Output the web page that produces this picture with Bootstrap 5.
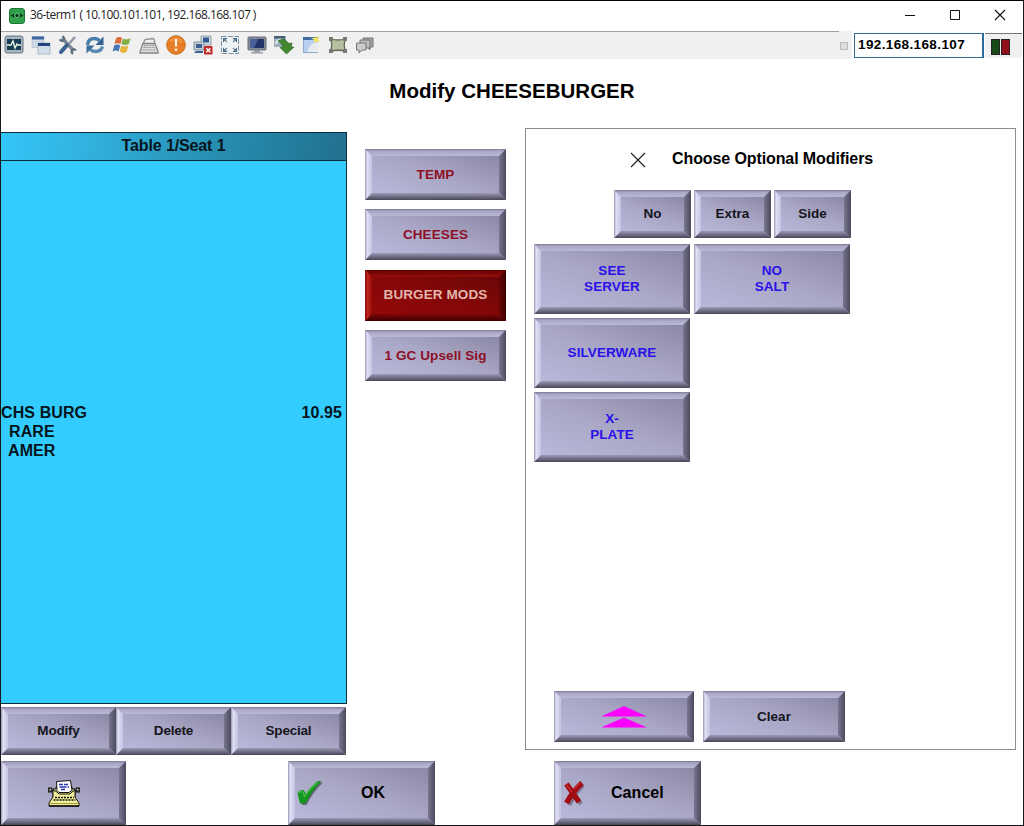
<!DOCTYPE html>
<html lang="en">
<head>
<meta charset="utf-8">
<meta name="viewport" content="width=device-width, initial-scale=1">
<title>36-term1</title>
<link href="https://cdn.jsdelivr.net/npm/bootstrap@5.3.0/dist/css/bootstrap.min.css" rel="stylesheet">
<style>
body{font-family:"Liberation Sans",Arial,sans-serif;color:#000;background:#fff;overflow:hidden}
.win{width:1024px;height:826px;border:1px solid #17171c;border-top-color:#000}
.titlebar{height:30px;padding-left:8px;font:12px/30px "Open Sans",sans-serif;color:#222}
.titlebar .cap{margin:-2px 0 0 5px;letter-spacing:-.57px;white-space:nowrap}
.winctl{gap:33px;padding-right:17px;margin-top:-2px}
.tools{height:28px}
.strip{width:851px;padding-left:3px;background:#f0f0f0;position:relative}
.strip .icons{gap:7px}
.strip svg{width:20px;height:20px;display:block;flex:none}
.strip::before{content:"";position:absolute;left:0;top:0;width:838px;height:1px;background:#a3a3a3}
.tick{width:8px;height:8px;background:#ddd;border:1px solid #bbb;margin:2px 4px 0 0}
.addr{width:130px;height:25px;margin:2px 0 0 2px;border:1px solid #2c6c98;border-right-width:2px;padding-left:3px;font:bold 13.5px/21px "Liberation Sans",sans-serif;letter-spacing:.38px;background:#fff}
.leds{width:37px;height:25px;margin:2px 0 0 1px;border-top:1px solid #777;background:#f0f0f0;padding:5px 0 0 6px;gap:1px}
.led{width:9px;height:16px;border:1px solid #222}
.page-title{height:69px;padding-top:20px;font-size:20.5px;line-height:24px;font-weight:bold;letter-spacing:.02px}
.main{height:623px}
.left{width:346px;margin-top:4px}
.check{height:572px;background:#3cf;border:1px solid #0d2c3c;border-left:0}
.check-head{height:28px;border-bottom:1px solid #0d2c3c;background:linear-gradient(100deg,#33c6f8 0%,#32b2de 25%,#2790b4 60%,#247c9c 85%,#22708e);font-size:16px;line-height:26px;font-weight:bold;letter-spacing:-.12px;color:#06141b}
.check-lines{margin-top:242px;padding-right:4px;font-size:16px;line-height:19px;font-weight:bold;color:#06141b;letter-spacing:.1px}
.key{appearance:none;display:flex;align-items:center;justify-content:center;flex:none;text-align:center;padding:0;border:7px solid;color:#15151c;font-weight:bold;font-size:13.5px;line-height:16px;letter-spacing:0;border-radius:0;background:linear-gradient(20deg,#bab8da 0%,#a9a7c5 50%,#8b89a5 100%);
border-image:url("data:image/svg+xml,%3Csvg xmlns='http://www.w3.org/2000/svg' width='32' height='32'%3E%3Cdefs%3E%3ClinearGradient id='t' x2='0' y2='1'%3E%3Cstop stop-color='%237b7991'/%3E%3Cstop offset='.3' stop-color='%23a9a7c5'/%3E%3Cstop offset='1' stop-color='%23bbb9d8'/%3E%3C/linearGradient%3E%3ClinearGradient id='l'%3E%3Cstop stop-color='%239896b0'/%3E%3Cstop offset='.3' stop-color='%23e1e0f7'/%3E%3Cstop offset='1' stop-color='%23c4c3e1'/%3E%3C/linearGradient%3E%3ClinearGradient id='r'%3E%3Cstop stop-color='%23787690'/%3E%3Cstop offset='1' stop-color='%234b4a5b'/%3E%3C/linearGradient%3E%3ClinearGradient id='b' x2='0' y2='1'%3E%3Cstop stop-color='%239b99b6'/%3E%3Cstop offset='1' stop-color='%23484756'/%3E%3C/linearGradient%3E%3C/defs%3E%3Cpath fill='url(%23t)' d='M0 0H32L24 8H8z'/%3E%3Cpath fill='url(%23r)' d='M32 0V32L24 24V8z'/%3E%3Cpath fill='url(%23b)' d='M0 32H32L24 24H8z'/%3E%3Cpath fill='url(%23l)' d='M0 0V32L8 24V8z'/%3E%3C/svg%3E") 8 stretch}
.mid{width:141px;margin:21px 0 0 18px}
.key-m{width:141px;height:51px;margin-bottom:9.4px;color:#8e1026;letter-spacing:.1px}
.key-on{color:#e2b5ad;background:linear-gradient(20deg,#920808,#850707 50%,#6b0808);
border-image:url("data:image/svg+xml,%3Csvg xmlns='http://www.w3.org/2000/svg' width='32' height='32'%3E%3Cdefs%3E%3ClinearGradient id='t' x2='0' y2='1'%3E%3Cstop stop-color='%23600000'/%3E%3Cstop offset='1' stop-color='%23960f0c'/%3E%3C/linearGradient%3E%3ClinearGradient id='l'%3E%3Cstop stop-color='%23800808'/%3E%3Cstop offset='.35' stop-color='%23c0241f'/%3E%3Cstop offset='1' stop-color='%23960c0a'/%3E%3C/linearGradient%3E%3ClinearGradient id='b' x2='0' y2='1'%3E%3Cstop stop-color='%237c0606'/%3E%3Cstop offset='1' stop-color='%23400000'/%3E%3C/linearGradient%3E%3ClinearGradient id='r'%3E%3Cstop stop-color='%236a0505'/%3E%3Cstop offset='1' stop-color='%233a0000'/%3E%3C/linearGradient%3E%3C/defs%3E%3Cpath fill='url(%23t)' d='M0 0H32L24 8H8z'/%3E%3Cpath fill='url(%23r)' d='M32 0V32L24 24V8z'/%3E%3Cpath fill='url(%23b)' d='M0 32H32L24 24H8z'/%3E%3Cpath fill='url(%23l)' d='M0 0V32L8 24V8z'/%3E%3C/svg%3E") 8 stretch}
.panel{width:491px;height:622px;margin-left:19px;border:1px solid #8c8c8c}
.choose{height:61px;padding:20px 0 0 104px;font-size:16px;line-height:20px;font-weight:bold;letter-spacing:-.1px}
.prefixes{gap:3px;margin-left:88px}
.prefixes .key{width:77px;height:48px}
.mods{display:grid;grid-template-columns:156px 156px;grid-auto-rows:70px;gap:4px;margin:6px 0 0 8px}
.mods .key{color:#2a10ea;letter-spacing:.08px}
.pager{gap:9px;padding:0 0 7px 28px}
.pager .key{height:51px}
.key-row .key{width:115px;height:48px;letter-spacing:-.2px}
.foot{padding:10px 0 0 0}
.foot .key{height:64px;font-size:16px;line-height:20px;letter-spacing:.05px;color:#000}
.w147{width:147px}
</style>
</head>
<body>
<div class="win d-flex flex-column overflow-hidden">
  <header class="titlebar d-flex align-items-center justify-content-between">
    <div class="d-flex align-items-center">
      <svg width="16" height="16" viewBox="0 0 16 16" style="margin-top:-1px"><rect x=".5" y=".5" width="15" height="15" rx="2.5" fill="#31a04b" stroke="#1c7733"/><path d="M1.5 7.5Q8 2 14.5 7.5Q8 13 1.5 7.5z" fill="#103f20"/><circle cx="8" cy="7.5" r="3" fill="#4cb568"/><circle cx="8" cy="7.5" r="1.5" fill="#05230d"/></svg>
      <span class="cap">36-term1 ( 10.100.101.101, 192.168.168.107 )</span>
    </div>
    <div class="winctl d-flex align-items-center">
      <svg width="12" height="12"><path d="M1 6.5H11" stroke="#111"/></svg>
      <svg width="12" height="12"><path d="M1.500 1.500h9v9h-9z" fill="none" stroke="#111"/></svg>
      <svg width="12" height="12"><path d="M1 1L11 11M11 1L1 11" stroke="#111" stroke-width="1.1"/></svg>
    </div>
  </header>
  <div class="tools d-flex">
    <div class="strip d-flex align-items-center justify-content-between">
      <div class="icons d-flex">
        <svg viewBox="0 0 20 20"><rect x="1" y="1" width="18" height="17" rx="2" fill="#a9b4bd" stroke="#687785"/><rect x="3" y="4" width="14" height="11" fill="#173c56"/><path d="M3 10h4l2-4 2 7 2-4 1 1h3" fill="none" stroke="#eef2df" stroke-width="1.4"/></svg>
        <svg viewBox="0 0 20 20"><rect x="1" y="1.5" width="12" height="11" fill="#ccd8e6" stroke="#aab8c8" stroke-width=".6"/><path d="M1 1.500h12v3H1z" fill="#3d67a3"/><rect x="7" y="8" width="12" height="11" fill="#d2deea" stroke="#8fa0b5" stroke-width=".6"/><path d="M7 8h12v3H7z" fill="#24457c"/></svg>
        <svg viewBox="0 0 20 20"><path d="M4 3L16 16" stroke="#7c8a96" stroke-width="3.400"/><path d="M1.500 4.500Q4 7 6 5Q7 3 4.500 1" fill="none" stroke="#5d6b78" stroke-width="2"/><path d="M18 15.500Q16 13 14 15Q12.500 17 15 19" fill="none" stroke="#5d6b78" stroke-width="2"/><path d="M17 2L9 11" stroke="#8b98a4" stroke-width="2.400"/><path d="M9 10L3 17" stroke="#3c6290" stroke-width="4" stroke-linecap="round"/></svg>
        <svg viewBox="0 0 20 20"><path d="M2.500 10Q3 3.500 9.500 3.500Q12.500 3.500 14.500 5.500" fill="none" stroke="#4a7cab" stroke-width="3.400"/><path d="M18.500 1.500V10H10.500z" fill="#315f90"/><path d="M17.500 11.500Q16 16.500 10.500 16.500Q7.500 16.500 5.500 14.500" fill="none" stroke="#5a8ab4" stroke-width="3.400"/><path d="M1.500 18.500V10.500H9.500z" fill="#3d6d9d"/></svg>
        <svg viewBox="0 0 20 20"><path d="M4 3.500Q7 1 10 3L8.500 9Q6 7.500 2.500 9z" fill="#dc6c36"/><path d="M11 3.500Q15 5.500 18.500 3L16.800 9Q13 11 9.500 9z" fill="#80ad45"/><path d="M2.200 10.500Q5.500 8.500 8.200 10.500L6.600 16.500Q4 14.500.6 16.500z" fill="#4577b8"/><path d="M9.200 10.800Q13 12.500 16.400 10.600L14.700 16.800Q11.500 19 7.700 16.800z" fill="#e6b43d"/></svg>
        <svg viewBox="0 0 20 20"><path d="M4 9L6 4.500L14 3.500L15.500 5V8" fill="none" stroke="#919191" stroke-width="1.300"/><path d="M4 8.500h12l3 8v1.500H1v-1.500z" fill="#ddd" stroke="#858585" stroke-width="1.300"/><path d="M5 10.500h10M4.500 12.500h11.500M3.500 15h13" stroke="#999" stroke-dasharray="2 .7"/></svg>
        <svg viewBox="0 0 20 20"><circle cx="10" cy="10" r="9.300" fill="#e77d25" stroke="#c76b20"/><path d="M3 7Q6 1.500 12 2.500Q16 4 17 8Q10 5 3 7z" fill="#f4a055" opacity=".6"/><path d="M10 4v7.500M10 13.500V16" stroke="#fff3e5" stroke-width="2.200"/></svg>
        <svg viewBox="0 0 20 20"><path d="M8 1h10v9H8z" fill="#d0d7df" stroke="#91a0af"/><path d="M10 2.500h6v5h-6z" fill="#31598f"/><path d="M1 7h10v8H1z" fill="#c7d0da" stroke="#7f8fa0"/><path d="M3 9h6v4H3zM3 16h7v2H1z" fill="#3b6191"/><rect x="11" y="11" width="8.500" height="8.500" rx="1" fill="#c32a27"/><path d="M13.300 13.300l4 4m0-4l-4 4" stroke="#fff" stroke-width="1.500"/></svg>
        <svg viewBox="0 0 20 20"><path d="M1.500 1.500h17v17h-17z" fill="#eef3f5" stroke="#7791a3" stroke-dasharray="5 1.500"/><path d="M3 3h4.500L3 7.500zM17 3v4.500L12.500 3zM3 17v-4.500L7.500 17zM17 17h-4.500L17 12.500z" fill="#456580"/><path d="M4 4l3 3M16 4l-3 3M4 16l3-3M16 16l-3-3" stroke="#6d8799" stroke-width="1.200"/></svg>
        <svg viewBox="0 0 20 20"><rect x="1" y="2" width="18" height="13" rx="1" fill="#848b95" stroke="#666e7a"/><path d="M3 4h14v9H3z" fill="#24346b"/><path d="M3 4h8L7 13H3z" fill="#49629c"/><path d="M7 15h6v2h3v1.500H4V17h3z" fill="#999fa7"/></svg>
        <svg viewBox="0 0 20 20"><path d="M0 1h12v11H0z" fill="#9cafbd"/><path d="M0 1h11v2.500H0z" fill="#456276"/><path d="M2 9Q3 4 8 5" fill="none" stroke="#e8eeee" stroke-width="2"/><path d="M4 5.500L10 4l5 4.500 3-.5-1 4h3l-7.500 7L6 12.500l3-.5-1.500-3z" fill="#43882f" stroke="#2c6822" stroke-width=".7"/></svg>
        <svg viewBox="0 0 20 20"><path d="M2 2h15v16H2z" fill="#b7d0ef"/><path d="M2 2h14v3H2z" fill="#426ca5"/><path d="M6 18Q8 8 17 7v11z" fill="#e7ecef"/><path d="M2.500 5v12.500H17" fill="none" stroke="#8fa9c8"/><path d="M14 0l1.300 3 3.700-2-2 3.700 2 2.300-4-.7L13 9V5l-3-2h3.500z" fill="#f0e460"/></svg>
        <svg viewBox="0 0 20 20"><path d="M3 4q7 2 14 0q-1.500 6 0 12q-7-1.500-14 0q1.500-6 0-12z" fill="#b7bea0" stroke="#626b57" stroke-width="1.300"/><path d="M1 2h4v4H1zM15 2h4v4h-4zM1 14h4v4H1zM15 14h4v4h-4z" fill="#747a70"/></svg>
        <svg viewBox="0 0 20 20"><path d="M8 3h10v9h-3v3l-3-3H8z" fill="#a5a5a5" stroke="#777"/><path d="M5 5h10v8H5z" fill="#bdbdbd" stroke="#777"/><path d="M1.500 8H11v7H7l-3 3v-3H1.500z" fill="#ccc" stroke="#757575"/></svg>
      </div>
      <span class="tick"></span>
    </div>
    <div class="addr">192.168.168.107</div>
    <div class="leds d-flex"><span class="led" style="background:#174818"></span><span class="led" style="background:#8f101b"></span></div>
  </div>
  <h1 class="page-title m-0 text-center">Modify CHEESEBURGER</h1>
  <main class="main d-flex">
    <section class="left">
      <div class="check">
        <div class="check-head text-center">Table 1/Seat 1</div>
        <div class="check-lines">
          <div class="d-flex justify-content-between"><span>CHS BURG</span><span>10.95</span></div>
          <div class="ps-2">RARE</div>
          <div style="padding-left:7px">AMER</div>
        </div>
      </div>
      <div class="key-row d-flex" style="margin:3px 0 0 0">
        <button class="key">Modify</button><button class="key">Delete</button><button class="key">Special</button>
      </div>
    </section>
    <nav class="mid">
      <button class="key key-m">TEMP</button>
      <button class="key key-m">CHEESES</button>
      <button class="key key-m key-on">BURGER MODS</button>
      <button class="key key-m">1 GC Upsell Sig</button>
    </nav>
    <section class="panel d-flex flex-column">
      <div class="choose d-flex">
        <svg width="16" height="16" class="me-4" style="margin-top:3px"><path d="M1 1L15 15M15 1L1 15" stroke="#222" stroke-width="1.200"/></svg>
        <span style="padding-left:2px">Choose Optional Modifiers</span>
      </div>
      <div class="prefixes d-flex">
        <button class="key">No</button><button class="key">Extra</button><button class="key">Side</button>
      </div>
      <div class="mods">
        <button class="key">SEE<br>SERVER</button><button class="key">NO<br>SALT</button>
        <button class="key" style="grid-column:1">SILVERWARE</button>
        <button class="key" style="grid-column:1">X-<br>PLATE</button>
      </div>
      <div class="pager d-flex mt-auto">
        <button class="key" style="width:140px"><svg width="48" height="22"><path d="M1 10.500L24 0L47 10.500zM1 21.500L24 11.500L47 21.500z" fill="#f0f"/></svg></button>
        <button class="key" style="width:142px">Clear</button>
      </div>
    </section>
  </main>
  <footer class="foot d-flex">
    <button class="key" style="width:125px">
      <svg width="32" height="27" viewBox="0 0 32 27"><path d="M5 9h3v-2h16v2h3v8H5z" fill="#f2ee99" stroke="#111"/><path d="M8.500 1.500l14-1 1.500 10-3 2H11l-2-2z" fill="#fff" stroke="#111"/><path d="M11 4.500h4m1 0h4M11.500 7h7m1 0h1.500M13 9.500h4" stroke="#2733b5" stroke-width="1.300"/><path d="M0 8h4v4H0zM28 8h4v4h-4z" fill="#555" stroke="#111"/><path d="M2 9.500h1M29 9.500h1" stroke="#fff"/><path d="M5 10l4 2 2 2h11l2-2 3-2v7l4 6v3H1v-3l4-6z" fill="#f2ee99" stroke="#111"/><path d="M7 17.500h19M5.500 20h22" stroke="#111" stroke-width="1.500" stroke-dasharray="2 1"/><path d="M1 23.500h30" stroke="#a09b3c"/><path d="M1 26h30" stroke="#111" stroke-width="1.500"/></svg>
    </button>
    <button class="key w147 justify-content-start" style="margin-left:162px">
      <svg width="27" height="28" viewBox="0 0 27 28" style="margin-left:1px"><path d="M3.500 15Q6 11 9 14L10.500 17Q17 9 24 3.500L26.500 4Q17 13 10.500 26H6z" fill="#3b3b4a" opacity=".65"/><path d="M1.500 14Q5 9.500 8.500 12L9.500 15Q15 7 21.500 2L25.500 2Q16 12 9.500 24.500L4 24.500z" fill="#12961f"/><path d="M3 14Q5 11.500 7 13.500L8.500 17.500Q14 9 22 3.500" fill="none" stroke="#48c048" stroke-width="1.200"/></svg>
      <span style="margin-left:38px">OK</span>
    </button>
    <button class="key w147 justify-content-start" style="margin-left:119px">
      <svg width="24" height="28" viewBox="0 0 24 28" style="margin-left:1px"><path d="M6 7L19 25M21 6Q13 14 7 26" fill="none" stroke="#555064" stroke-width="4.500" opacity=".6"/><path d="M4.500 5L17 23M20 4Q11 12 4.500 24" fill="none" stroke="#a00c12" stroke-width="5.400"/><path d="M4 5L10 13M18 4L12 10" stroke="#c92e2e" stroke-width="1.300"/></svg>
      <span style="margin-left:25px">Cancel</span>
    </button>
  </footer>
</div>
<script src="https://cdn.jsdelivr.net/npm/bootstrap@5.3.0/dist/js/bootstrap.bundle.min.js"></script>
</body>
</html>
